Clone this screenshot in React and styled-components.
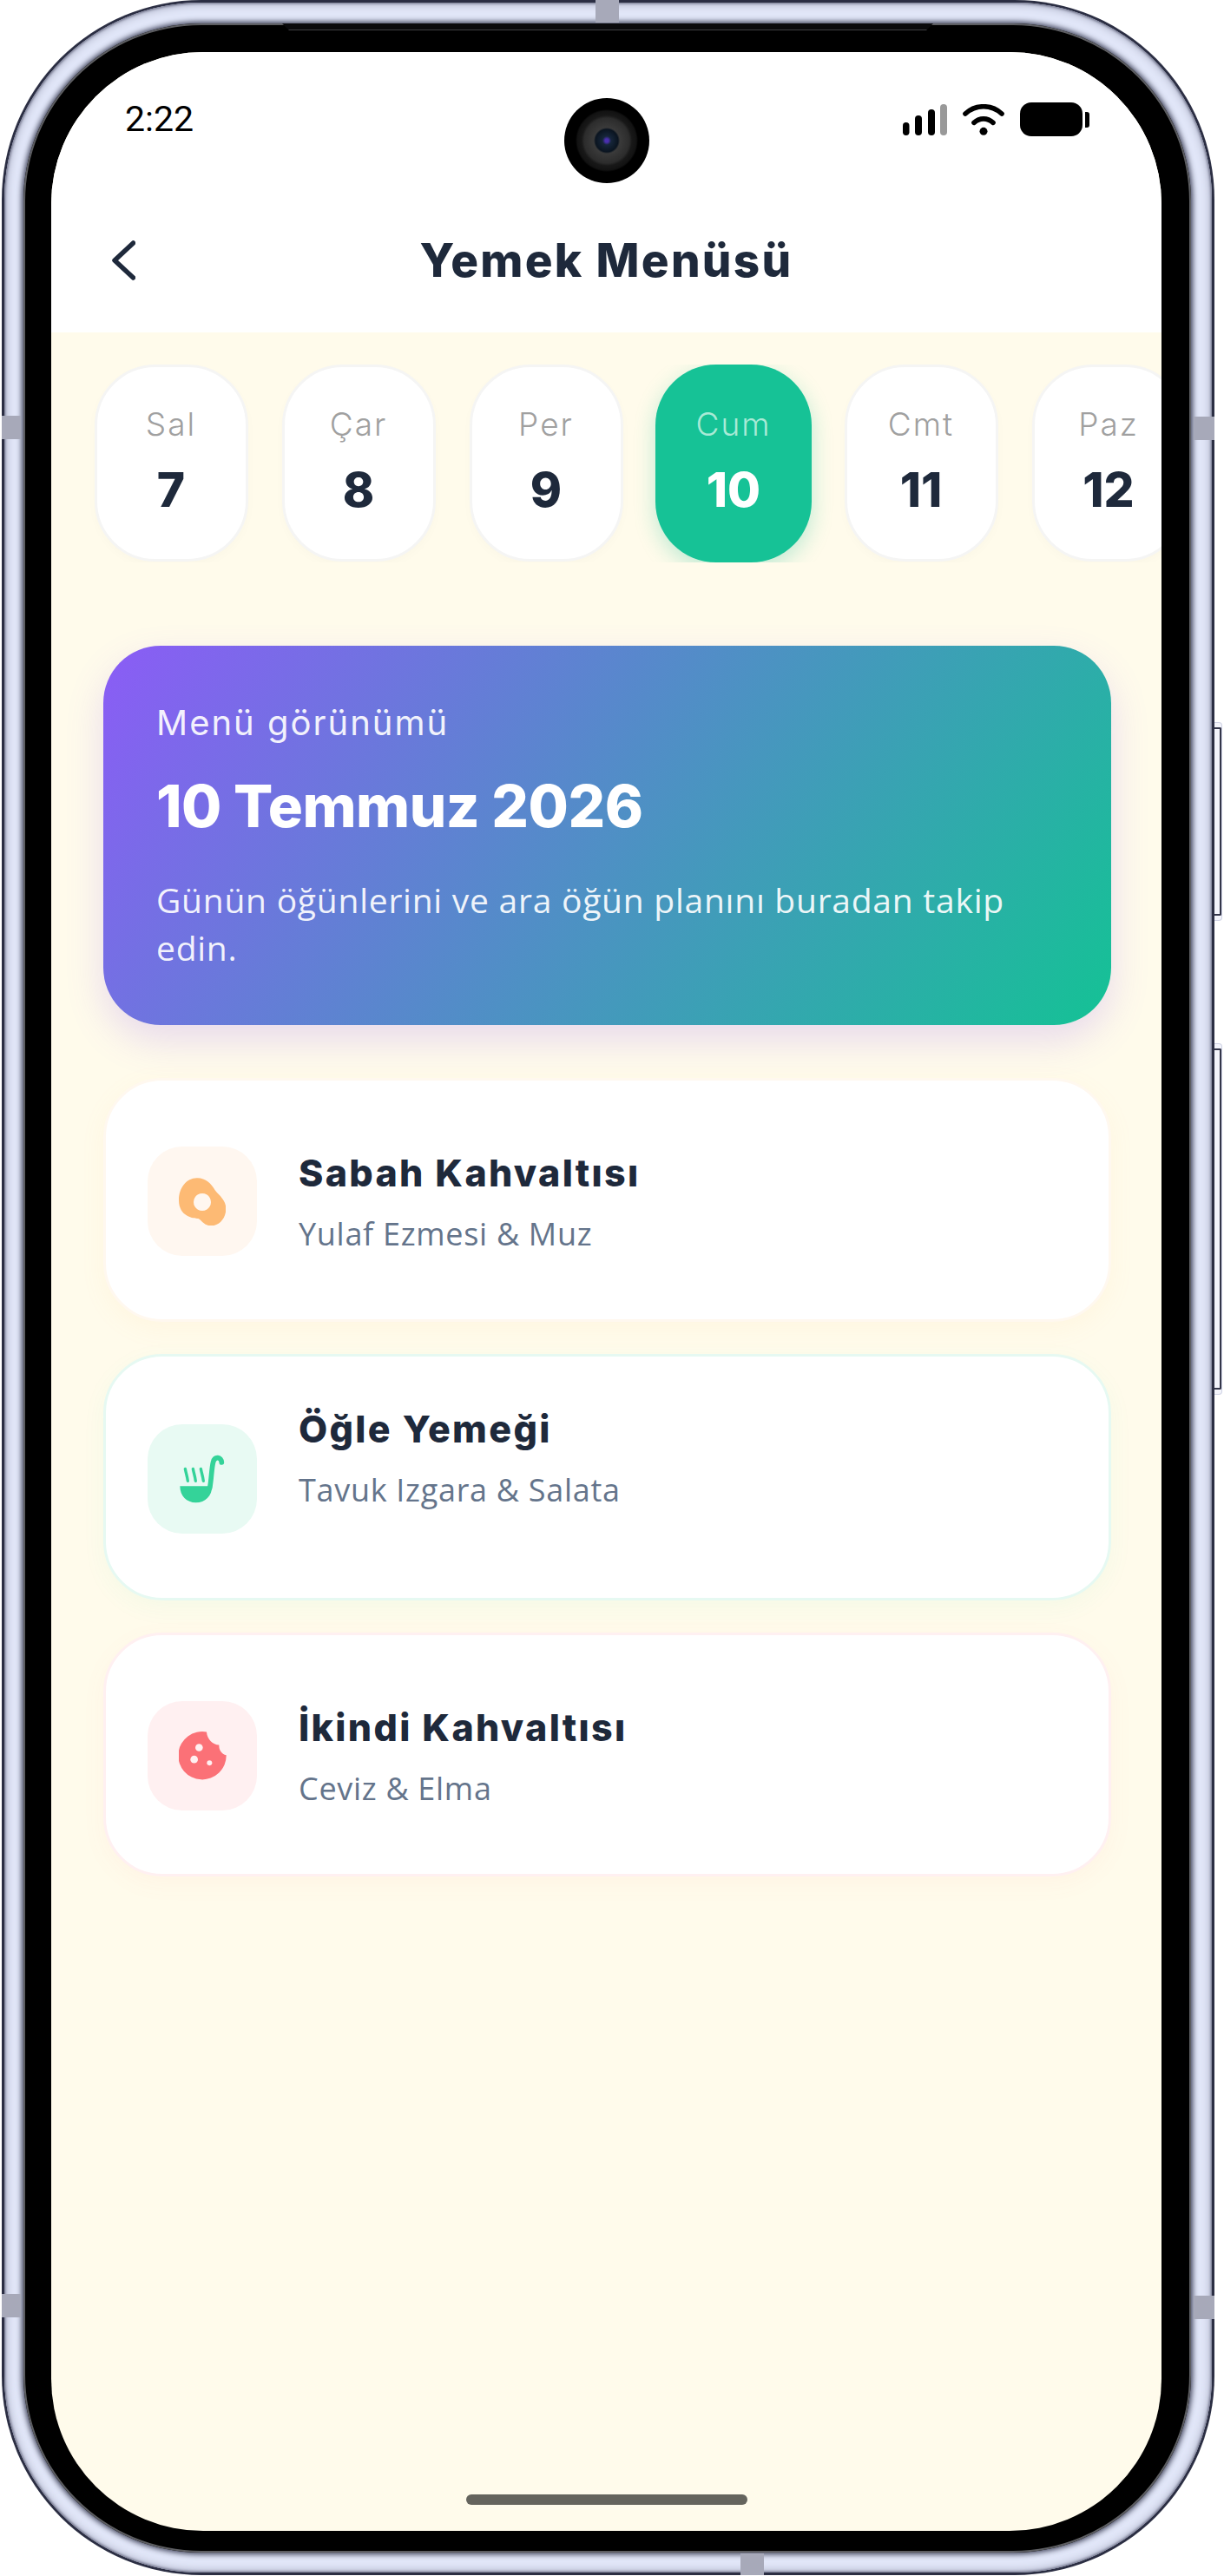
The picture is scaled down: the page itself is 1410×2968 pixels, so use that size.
import styled, { createGlobalStyle } from "styled-components";

const GlobalStyle = createGlobalStyle`
  * { box-sizing: border-box; }
  html, body { margin: 0; padding: 0; background: #fff; }
`;

const days = [
  { label: "Sal", day: 7 },
  { label: "Çar", day: 8 },
  { label: "Per", day: 9 },
  { label: "Cum", day: 10, active: true },
  { label: "Cmt", day: 11 },
  { label: "Paz", day: 12 },
];

const EggIcon = () => (
  <svg width="54" height="55" viewBox="318 405 162 165">
    <path
      fillRule="evenodd"
      fill="#fdba74"
      d="M380 406C410 405 430 425 443 448C455 465 481 480 481 512C481 545 458 571 430 571C405 571 398 552 385 546C370 545 318 540 318 482C318 440 345 406 380 406ZM399 459a30 30 0 1 0 .01 0Z"
    />
  </svg>
);

const LadleIcon = () => (
  <svg width="52" height="56" viewBox="324 405 156 168">
    <path fill="#34d399" d="M325 514H420L436 512C436 548 412 571 380 571C348 571 325 548 325 514Z" />
    <path
      fill="none"
      stroke="#34d399"
      strokeWidth="17"
      strokeLinecap="round"
      d="M428 520C434 490 434 450 440 430C445 410 468 412 469 432"
    />
    <path
      fill="none"
      stroke="#34d399"
      strokeWidth="10"
      strokeLinecap="round"
      d="M343 454C346 470 350 480 352 496M370 454C373 470 377 480 379 496M397 454C400 470 404 480 406 496"
    />
  </svg>
);

const CookieIcon = () => (
  <svg width="55" height="56" viewBox="317 402 165 167">
    <path
      fill="#fb7177"
      d="M413 403A83 83 0 1 0 481 483C468 480 455 468 456 448C435 447 415 430 413 403Z"
    />
    <circle cx="387" cy="457" r="13" fill="#fff0f1" />
    <circle cx="370" cy="498" r="13" fill="#fff0f1" />
    <circle cx="423" cy="510" r="9" fill="#fff0f1" />
  </svg>
);

const meals = [
  {
    title: "Sabah Kahvaltısı",
    text: "Yulaf Ezmesi & Muz",
    height: 281,
    lift: -2,
    border: "#fff8ef",
    tint: "#fff7f0",
    shadow: "rgba(253, 186, 116, 0.08)",
    Icon: EggIcon,
  },
  {
    title: "Öğle Yemeği",
    text: "Tavuk Izgara & Salata",
    height: 284,
    lift: 47,
    border: "#e6f9f2",
    tint: "#e8faf3",
    shadow: "rgba(52, 211, 153, 0.05)",
    Icon: LadleIcon,
  },
  {
    title: "İkindi Kahvaltısı",
    text: "Ceviz & Elma",
    height: 281,
    lift: -1,
    border: "#fff0f1",
    tint: "#fff0f1",
    shadow: "rgba(251, 113, 119, 0.05)",
    Icon: CookieIcon,
  },
];

export default function App() {
  return (
    <>
      <GlobalStyle />
      <Frame>
        <SideButton $top={832} $height={229} />
        <SideButton $top={1202} $height={405} />
        <Band>
          <Bezel>
            <NotchLine />
            <Screen>
              <Header>
                <StatusBar>
                  <Time>2:22</Time>
                  <StatusIcons>
                    <svg width="51" height="36" viewBox="0 0 51 36">
                      <rect x="0" y="21" width="7.5" height="15" rx="3.7" fill="#000" />
                      <rect x="14" y="13" width="8" height="23" rx="4" fill="#000" />
                      <rect x="29" y="6" width="8" height="30" rx="4" fill="#000" />
                      <rect x="43" y="0" width="8" height="36" rx="4" fill="#999" />
                    </svg>
                    <WifiIcon width="48" height="36" viewBox="268 60 142 108">
                      <path
                        d="M276 93C312 60 366 60 402 93M306 124C326 106 352 106 372 124"
                        fill="none"
                        stroke="#000"
                        strokeWidth="17"
                        strokeLinecap="round"
                      />
                      <circle cx="339" cy="154" r="13.5" fill="#000" />
                    </WifiIcon>
                    <Battery />
                    <BatteryCap />
                  </StatusIcons>
                </StatusBar>
                <Nav>
                  <BackButton>
                    <svg width="27" height="46" viewBox="0 0 27 46">
                      <polyline
                        points="24.5,3 3,23 24.5,43"
                        fill="none"
                        stroke="#1e293b"
                        strokeWidth="5.5"
                        strokeLinecap="round"
                        strokeLinejoin="round"
                      />
                    </svg>
                  </BackButton>
                  <Title>Yemek Menüsü</Title>
                </Nav>
              </Header>

              <DayRow>
                {days.map((item) => (
                  <DayCard key={item.day} $active={item.active}>
                    <DayLabel $active={item.active}>{item.label}</DayLabel>
                    <DayNumber $active={item.active}>{item.day}</DayNumber>
                  </DayCard>
                ))}
              </DayRow>

              <Banner>
                <BannerLabel>Menü görünümü</BannerLabel>
                <BannerDate>10 Temmuz 2026</BannerDate>
                <BannerText>
                  Günün öğünlerini ve ara öğün planını buradan takip edin.
                </BannerText>
              </Banner>

              <MealList>
                {meals.map(({ Icon, ...meal }) => (
                  <MealCard
                    key={meal.title}
                    $height={meal.height}
                    $border={meal.border}
                    $shadow={meal.shadow}
                  >
                    <MealIcon $tint={meal.tint}>
                      <Icon />
                    </MealIcon>
                    <MealText $lift={meal.lift}>
                      <MealTitle>{meal.title}</MealTitle>
                      <MealSub>{meal.text}</MealSub>
                    </MealText>
                  </MealCard>
                ))}
              </MealList>

              <HomeBar />
            </Screen>
            <Camera />
          </Bezel>
        </Band>
        <Antenna $side="top" />
        <Antenna $side="bottom" />
        <Antenna $side="left" $y={479} />
        <Antenna $side="right" $y={480} />
        <Antenna $side="left" $y={2643} />
        <Antenna $side="right" $y={2645} />
      </Frame>
    </>
  );
}

const Frame = styled.div`
  position: relative;
  width: 1397px;
  height: 2967px;
  margin-left: 2px;
  padding: 3px;
  border-radius: 230px;
  background: #2b2e43;
`;

const Band = styled.div`
  position: relative;
  width: 100%;
  height: 100%;
  padding: 24px 24px 23px 22px;
  border-radius: 227px;
  background: #e1e6f8;
  box-shadow: inset 0 0 3px 1px #6a6d84, inset 0 0 8px 3px #b4b8cc;
`;

const Bezel = styled.div`
  position: relative;
  width: 100%;
  height: 100%;
  padding: 33px 34px 25px 32px;
  border-radius: 205px;
  background: #000;
  box-shadow: inset 0 0 0 2px #5d5e62, 0 0 6px 2px #3d4057;
`;

const NotchLine = styled.div`
  position: absolute;
  top: 0;
  left: 298px;
  right: 297px;
  height: 8px;
  background: #0a0a0c;
  border-bottom: 1px solid #3f3f44;
  clip-path: polygon(0 0, 100% 0, calc(100% - 8px) 100%, 8px 100%);
`;

const Screen = styled.div`
  display: flex;
  flex-direction: column;
  height: 100%;
  overflow: hidden;
  border-radius: 175px;
  background: #fffbeb;
`;

const Header = styled.header`
  flex: none;
  height: 323px;
  background: #fff;
`;

const StatusBar = styled.div`
  display: flex;
  align-items: center;
  justify-content: space-between;
  height: 39px;
  margin-top: 58px;
  padding: 0 83px 0 85px;
`;

const Time = styled.span`
  font-family: Roboto, sans-serif;
  font-size: 41px;
  line-height: 39px;
  color: #000;
`;

const StatusIcons = styled.div`
  display: flex;
  align-items: center;
`;

const WifiIcon = styled.svg`
  margin: 0 18px;
`;

const Battery = styled.span`
  display: block;
  width: 72px;
  height: 39px;
  border-radius: 13px;
  background: #000;
`;

const BatteryCap = styled.span`
  display: block;
  width: 5px;
  height: 18px;
  margin-left: 3px;
  border-radius: 0 3px 3px 0;
  background: #000;
`;

const Nav = styled.div`
  position: relative;
  display: flex;
  align-items: center;
  justify-content: center;
  height: 80px;
  margin-top: 103px;
`;

const BackButton = styled.div`
  position: absolute;
  left: 70px;
  top: 17px;
  display: flex;
`;

const Title = styled.h1`
  margin: 0;
  font-family: Inter, sans-serif;
  font-size: 53px;
  font-weight: 800;
  letter-spacing: 2.3px;
  line-height: 80px;
  color: #1e293b;
`;

const DayRow = styled.div`
  flex: none;
  display: flex;
  gap: 39px;
  height: 228px;
  margin-top: 37px;
  padding-left: 49.5px;
  overflow: hidden;
`;

const DayCard = styled.div`
  flex: none;
  display: flex;
  flex-direction: column;
  align-items: center;
  justify-content: center;
  width: ${(p) => (p.$active ? "180px" : "177px")};
  height: ${(p) => (p.$active ? "228px" : "227px")};
  margin: ${(p) => (p.$active ? "0 -1.5px" : "0")};
  padding-bottom: 4px;
  border: ${(p) => (p.$active ? "none" : "3px solid #f5f5f4")};
  border-radius: 70px;
  background: ${(p) => (p.$active ? "#16c296" : "#fff")};
  box-shadow: ${(p) =>
    p.$active
      ? "0 8px 24px rgba(22, 194, 150, 0.28)"
      : "0 4px 12px rgba(0, 0, 0, 0.02)"};
`;

const DayLabel = styled.span`
  font-family: Inter, sans-serif;
  font-size: 37px;
  font-weight: 300;
  letter-spacing: 2px;
  line-height: 44px;
  color: ${(p) => (p.$active ? "#a9ead6" : "#a0a0a0")};
`;

const DayNumber = styled.span`
  margin-top: 20px;
  font-family: Inter, sans-serif;
  font-size: 55px;
  font-weight: 800;
  line-height: 66px;
  color: ${(p) => (p.$active ? "#fff" : "#1e293b")};
`;

const Banner = styled.section`
  flex: none;
  width: 1161px;
  height: 437px;
  margin: 96px 0 0 60px;
  padding: 64px 61px 0;
  border-radius: 66px;
  background: linear-gradient(125deg, #8b5cf6 0%, #14c295 100%);
  box-shadow: 0 18px 44px rgba(139, 92, 246, 0.2);
`;

const BannerLabel = styled.div`
  font-family: Inter, sans-serif;
  font-size: 40px;
  font-weight: 400;
  letter-spacing: 2px;
  line-height: 50px;
  color: rgba(255, 255, 255, 0.92);
`;

const BannerDate = styled.div`
  margin-top: 31px;
  font-family: Inter, sans-serif;
  font-size: 67px;
  font-weight: 800;
  letter-spacing: -0.5px;
  line-height: 80px;
  color: #fff;
`;

const BannerText = styled.p`
  margin: 40px 0 0;
  font-family: "Open Sans", sans-serif;
  font-size: 39px;
  letter-spacing: 0.75px;
  line-height: 55px;
  color: rgba(255, 255, 255, 0.92);
`;

const MealList = styled.div`
  flex: none;
  display: flex;
  flex-direction: column;
  gap: 37px;
  width: 1161px;
  margin: 61px 0 0 60px;
`;

const MealCard = styled.article`
  display: flex;
  align-items: center;
  gap: 48px;
  height: ${(p) => p.$height}px;
  padding: 3px 0 0 48px;
  border: 3px solid ${(p) => p.$border};
  border-radius: 68px;
  background: #fff;
  box-shadow: 0 8px 28px ${(p) => p.$shadow};
`;

const MealIcon = styled.div`
  flex: none;
  display: flex;
  align-items: center;
  justify-content: center;
  width: 126px;
  height: 126px;
  border-radius: 40px;
  background: ${(p) => p.$tint};
`;

const MealText = styled.div`
  display: flex;
  flex-direction: column;
  margin-bottom: ${(p) => p.$lift}px;
`;

const MealTitle = styled.h2`
  margin: 0;
  font-family: Inter, sans-serif;
  font-size: 43px;
  font-weight: 800;
  letter-spacing: 2.3px;
  line-height: 56px;
  color: #1e293b;
`;

const MealSub = styled.p`
  margin: 18px 0 0;
  font-family: "Open Sans", sans-serif;
  font-size: 36px;
  letter-spacing: 0.7px;
  line-height: 50px;
  color: #64748b;
`;

const HomeBar = styled.div`
  flex: none;
  width: 324px;
  height: 12px;
  margin: auto auto 30px;
  border-radius: 6px;
  background: #65645d;
`;

const Camera = styled.div`
  position: absolute;
  top: 86px;
  left: 623px;
  width: 98px;
  height: 98px;
  border-radius: 50%;
  background: radial-gradient(
    circle at 50% 50%,
    #4a2fb0 0 2px,
    #16263a 5px,
    #0a1420 13px,
    #3a3a3a 15px,
    #2c2c2c 26px,
    #181818 29px,
    #121212 34px,
    #000 36px
  );
`;

const Antenna = styled.div`
  position: absolute;
  background: #a7a9b9;
  ${(p) => p.$side === "top" && "top: 0; left: 684px; width: 27px; height: 26px;"}
  ${(p) => p.$side === "bottom" && "bottom: 0; left: 851px; width: 27px; height: 25px;"}
  ${(p) => p.$side === "left" && `top: ${p.$y}px; left: 0; width: 22px; height: 27px;`}
  ${(p) => p.$side === "right" && `top: ${p.$y}px; right: 0; width: 24px; height: 27px;`}
`;

const SideButton = styled.div`
  position: absolute;
  top: ${(p) => p.$top}px;
  right: -9px;
  width: 9px;
  height: ${(p) => p.$height}px;
  border: 1px solid #cfd2e4;
  border-left: none;
  border-radius: 0 4px 4px 0;
  background: #f3f4fb;

  &::before {
    content: "";
    position: absolute;
    top: 5px;
    bottom: 5px;
    left: 0;
    width: 6px;
    border: 2px solid #34364a;
    border-left: none;
    border-radius: 0 2px 2px 0;
  }
`;
